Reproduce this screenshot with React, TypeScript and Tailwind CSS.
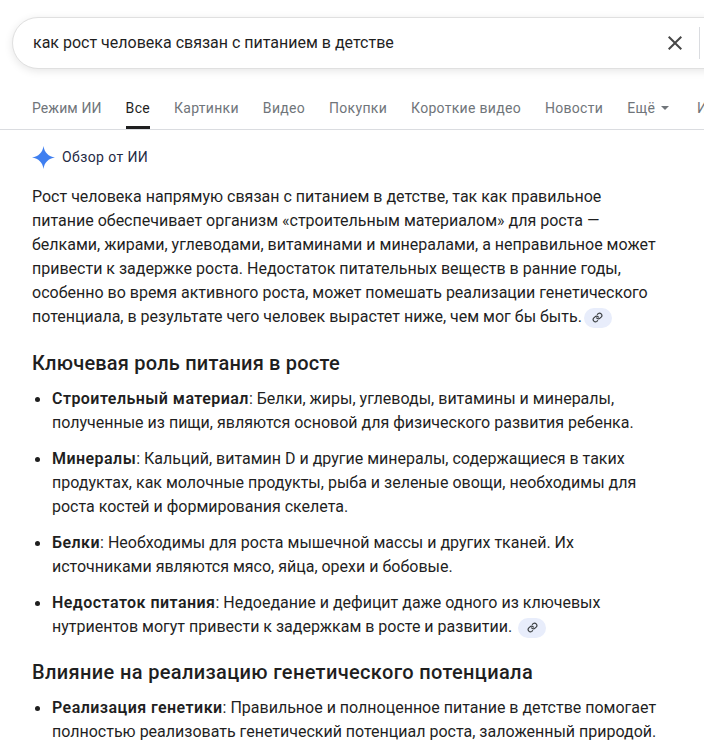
import React from "react";

const F = { fontFamily: '"Roboto", "Noto Sans", sans-serif' };

function LinkChip({ wide }: { wide?: boolean }) {
  return (
    <span className={"inline-flex h-[20px] w-[28px] items-center justify-center rounded-full bg-[#e8edfb] align-[-1px] " + (wide ? "ml-[6px]" : "ml-[2px]")}>
      <svg width="11" height="11" viewBox="0 0 24 24" fill="none" stroke="#3c4043" strokeWidth="2.6" strokeLinecap="round" strokeLinejoin="round">
        <path d="M10 13a5 5 0 0 0 7.5.5l3-3a5 5 0 0 0-7-7l-1.7 1.7" />
        <path d="M14 11a5 5 0 0 0-7.5-.5l-3 3a5 5 0 0 0 7 7l1.7-1.7" />
      </svg>
    </span>
  );
}

function Item({ b, children }: { b: string; children: React.ReactNode }) {
  return (
    <li className="relative pl-[20px]">
      <span className="absolute left-[3px] top-[10px] h-[5px] w-[5px] rounded-full bg-[#1f1f1f]" />
      <b className="font-semibold tracking-[0.45px]">{b}</b>
      {children}
    </li>
  );
}

export default function App() {
  const tabs = ["Режим ИИ", "Все", "Картинки", "Видео", "Покупки", "Короткие видео", "Новости"];
  return (
    <div className="h-[756px] w-[704px] overflow-hidden bg-white text-[#1f1f1f]" style={F}>
      <div className="pl-[12px] pt-[17px]">
        <div className="flex h-[52px] w-[760px] items-center rounded-[26px] border border-[#e0e0e0] bg-white pl-[20px] text-[16px] text-[#1f1f1f] shadow-[0_2px_8px_rgba(0,0,0,0.1)]">
          <span className="w-[630px]">как рост человека связан с питанием в детстве</span>
          <svg width="24" height="24" viewBox="0 0 24 24" fill="#474747" className="shrink-0">
            <path d="M19 6.41 17.59 5 12 10.59 6.41 5 5 6.41 10.59 12 5 17.59 6.41 19 12 13.41 17.59 19 19 17.59 13.41 12z" />
          </svg>
          <span className="ml-[12px] h-[32px] w-px bg-[#dadce0]" />
        </div>
      </div>
      <div className="mt-[12px] flex h-[49px] w-[704px] gap-[24px] overflow-hidden border-b border-[#dadce0] pl-[32px] text-[14px] font-[450] tracking-[0.3px] text-[#70757a]">
        {tabs.map((t, i) => (
          <div
            key={t}
            className={
              "flex shrink-0 items-center border-b-[3px] pt-[9px] " +
              (t === "Все" ? "border-[#1f1f1f] text-[#1f1f1f]" : "border-transparent") +
              (i === 0 ? " tracking-[0.1px]" : "")
            }
          >
            {t}
          </div>
        ))}
        <div className="flex shrink-0 items-center gap-[6px] pt-[6px]">
          Ещё
          <span className="h-0 w-0 border-x-[4px] border-t-[4px] border-x-transparent border-t-[#70757a]" />
        </div>
        <div className="flex shrink-0 items-center pl-[4px] pt-[6px]">Инструменты</div>
      </div>
      <div className="w-[662px] pl-[32px]">
        <div className="flex h-[55px] items-center gap-[7px] text-[14px] font-[450] tracking-[0.4px] text-[#1f2a44]">
          <svg width="23" height="23" viewBox="0 0 24 24" fill="#3f7ff0">
            <path d="M12 0c.9 6.8 5.2 11.1 12 12-6.8.9-11.1 5.2-12 12-.9-6.8-5.2-11.1-12-12 6.8-.9 11.1-5.2 12-12z" />
          </svg>
          Обзор от ИИ
        </div>
        <p className="text-[16px] leading-[24px]">
          Рост человека напрямую связан с питанием в детстве, так как правильное питание обеспечивает организм «строительным материалом» для роста — белками, жирами, углеводами, витаминами и минералами, а неправильное может привести к задержке роста. Недостаток питательных веществ в ранние годы, особенно во время активного роста, может помешать реализации генетического потенциала, в результате чего человек вырастет ниже, чем мог бы быть.
          <LinkChip />
        </p>
        <h2 className="mt-[20px] text-[20px] font-medium leading-[28px] tracking-[0.2px]">Ключевая роль питания в росте</h2>
        <ul className="mt-[10px] flex flex-col gap-[12px] text-[16px] leading-[24px]">
          <Item b="Строительный материал">: Белки, жиры, углеводы, витамины и минералы, полученные из пищи, являются основой для физического развития ребенка.</Item>
          <Item b="Минералы">: Кальций, витамин D и другие минералы, содержащиеся в таких продуктах, как молочные продукты, рыба и зеленые овощи, необходимы для роста костей и формирования скелета.</Item>
          <Item b="Белки">: Необходимы для роста мышечной массы и других тканей. Их источниками являются мясо, яйца, орехи и бобовые.</Item>
          <Item b="Недостаток питания">: Недоедание и дефицит даже одного из ключевых нутриентов могут привести к задержкам в росте и развитии.<LinkChip wide /></Item>
        </ul>
        <h2 className="mt-[19px] whitespace-nowrap text-[20px] font-medium leading-[28px] tracking-[0.35px]">Влияние на реализацию генетического потенциала</h2>
        <ul className="mt-[10px] text-[16px] leading-[24px]">
          <Item b="Реализация генетики">: Правильное и полноценное питание в детстве помогает полностью реализовать генетический потенциал роста, заложенный природой.</Item>
        </ul>
      </div>
    </div>
  );
}
